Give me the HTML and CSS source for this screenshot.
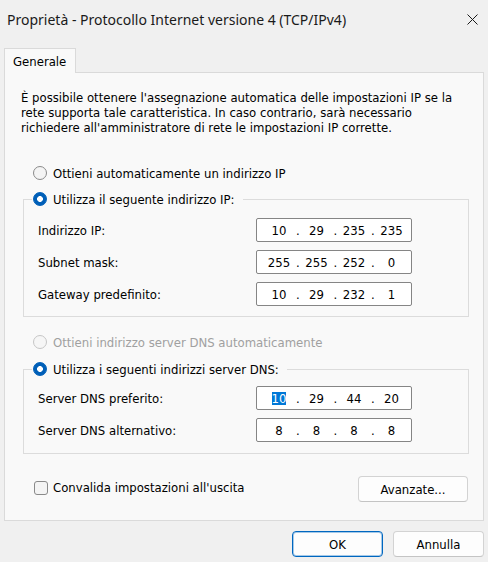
FILE: index.html
```html
<!DOCTYPE html>
<html lang="it">
<head>
<meta charset="utf-8">
<title>Proprietà - Protocollo Internet versione 4 (TCP/IPv4)</title>
<link rel="stylesheet" href="styles.css">
</head>
<body>
<div class="window">
  <div class="titlebar">
    <span class="title">Proprietà - Protocollo Internet versione 4 (TCP/IPv4)</span>
    <svg class="close" width="11" height="11" viewBox="0 0 11 11" aria-label="Chiudi">
      <path d="M0.5 0.5 L10.5 10.5 M10.5 0.5 L0.5 10.5" stroke="#1a1a1a" stroke-width="1" fill="none"/>
    </svg>
  </div>

  <div class="tabstrip">
    <div class="tab">Generale</div>
  </div>

  <div class="panel">
    <p class="intro">È possibile ottenere l'assegnazione automatica delle impostazioni IP se la<br>rete supporta tale caratteristica. In caso contrario, sarà necessario<br>richiedere all'amministratore di rete le impostazioni IP corrette.</p>

    <div class="option option-auto-ip">
      <span class="radio"></span>
      <span>Ottieni automaticamente un indirizzo IP</span>
    </div>

    <fieldset class="group group-ip">
      <legend class="legend">
        <span class="radio checked"></span>
        <span>Utilizza il seguente indirizzo IP:</span>
      </legend>
      <div class="rows rows-ip">
        <span class="label">Indirizzo IP:</span>
        <div class="ip"><span class="oct">10</span><span class="dot">.</span><span class="oct">29</span><span class="dot">.</span><span class="oct">235</span><span class="dot">.</span><span class="oct">235</span></div>
        <span class="label">Subnet mask:</span>
        <div class="ip"><span class="oct">255</span><span class="dot">.</span><span class="oct">255</span><span class="dot">.</span><span class="oct">252</span><span class="dot">.</span><span class="oct">0</span></div>
        <span class="label">Gateway predefinito:</span>
        <div class="ip"><span class="oct">10</span><span class="dot">.</span><span class="oct">29</span><span class="dot">.</span><span class="oct">232</span><span class="dot">.</span><span class="oct">1</span></div>
      </div>
    </fieldset>

    <div class="option option-auto-dns disabled">
      <span class="radio"></span>
      <span>Ottieni indirizzo server DNS automaticamente</span>
    </div>

    <fieldset class="group group-dns">
      <legend class="legend">
        <span class="radio checked"></span>
        <span>Utilizza i seguenti indirizzi server DNS:</span>
      </legend>
      <div class="rows rows-dns">
        <span class="label">Server DNS preferito:</span>
        <div class="ip"><span class="oct"><span class="sel">10</span></span><span class="dot">.</span><span class="oct">29</span><span class="dot">.</span><span class="oct">44</span><span class="dot">.</span><span class="oct">20</span></div>
        <span class="label">Server DNS alternativo:</span>
        <div class="ip"><span class="oct">8</span><span class="dot">.</span><span class="oct">8</span><span class="dot">.</span><span class="oct">8</span><span class="dot">.</span><span class="oct">8</span></div>
      </div>
    </fieldset>

    <div class="bottom-row">
      <div class="check-option">
        <span class="checkbox"></span>
        <span>Convalida impostazioni all'uscita</span>
      </div>
      <button class="btn btn-advanced">Avanzate...</button>
    </div>
  </div>

  <div class="footer">
    <button class="btn btn-dialog btn-default">OK</button>
    <button class="btn btn-dialog">Annulla</button>
  </div>
</div>
</body>
</html>
```

FILE: styles.css
```css
html, body {
  margin: 0;
  padding: 0;
}

body {
  background: #f0f0f0;
  color: #000;
  font-family: "DejaVu Sans Condensed", "DejaVu Sans", Tahoma, sans-serif;
  font-size: 13px;
  line-height: 15px;
}

.window {
  width: 488px;
  height: 562px;
  overflow: hidden;
}

.titlebar {
  height: 38px;
  display: flex;
  align-items: center;
  justify-content: space-between;
  padding: 0 10px 0 7px;
}

.title {
  font-family: "Noto Sans", "Open Sans", sans-serif;
  font-size: 14px;
  line-height: 19px;
  color: #1a1a1a;
}

.close {
  display: block;
}

.tabstrip {
  margin-top: 10px;
  padding-left: 4px;
  display: flex;
  position: relative;
  z-index: 1;
}

.tab {
  width: 72px;
  height: 25px;
  box-sizing: border-box;
  border: 1px solid #dadada;
  border-bottom: none;
  background: #f9f9f9;
  padding: 5px 0 0 8px;
}

.panel {
  margin: -1px 4px 0 4px;
  border: 1px solid #dadada;
  background: #f9f9f9;
  padding: 17px 14px 18px 16px;
}

.intro {
  margin: 0;
  white-space: nowrap;
}

.option {
  display: flex;
  align-items: center;
  gap: 6px;
  height: 16px;
  margin-left: 12px;
}

.option-auto-ip {
  margin-top: 30px;
}

.option-auto-dns {
  margin-top: 17px;
}

.disabled {
  color: #a0a0a0;
}

.radio {
  width: 14px;
  height: 14px;
  box-sizing: border-box;
  border-radius: 50%;
  border: 1px solid #8a8a8a;
  background: #f4f4f4;
  flex: none;
}

.radio.checked {
  border-color: #005fb8;
  background: radial-gradient(circle, #ffffff 0 2.6px, #005fb8 3.2px);
}

.disabled .radio {
  border-color: #c6c6c6;
  background: #f6f6f6;
}

.group {
  margin: 0 0 0 2px;
  padding: 0;
  border: 1px solid #dcdcdc;
  min-width: 0;
}

.group-ip {
  margin-top: 10px;
}

.group-dns {
  margin-top: 11px;
}

.legend {
  display: flex;
  align-items: center;
  gap: 6px;
  height: 16px;
  margin-left: 8px;
  padding: 0 8px 0 1px;
}

.rows {
  display: grid;
  grid-template-columns: 218px 156px;
  row-gap: 8px;
  align-items: center;
  padding-left: 14px;
}

.rows-ip {
  padding-top: 11px;
  padding-bottom: 10px;
}

.rows-dns {
  padding-top: 9px;
  padding-bottom: 11px;
}

.ip {
  display: flex;
  align-items: center;
  height: 24px;
  box-sizing: border-box;
  border: 1px solid #858585;
  border-radius: 2px;
  background: #ffffff;
  padding-left: 7px;
}

.oct {
  width: 30px;
  text-align: center;
}

.dot {
  width: 7.5px;
  text-align: center;
}

.sel {
  display: inline-block;
  background: #0078d7;
  color: #ffffff;
  line-height: 13px;
}

.bottom-row {
  display: flex;
  align-items: center;
  justify-content: space-between;
  margin-top: 22px;
  padding-left: 13px;
  padding-right: 1px;
}

.check-option {
  display: flex;
  align-items: center;
  gap: 5px;
  margin-top: -3px;
}

.checkbox {
  width: 14px;
  height: 14px;
  box-sizing: border-box;
  border: 1px solid #8a8a8a;
  border-radius: 3px;
  background: #f4f4f4;
}

.btn {
  font: inherit;
  color: #000;
  height: 26px;
  box-sizing: border-box;
  border: 1px solid #d3d3d3;
  border-bottom-color: #c4c4c4;
  border-radius: 4px;
  background: #fdfdfd;
  padding: 0;
  margin: 0;
}

.btn-advanced {
  width: 110px;
}

.footer {
  display: flex;
  justify-content: flex-end;
  gap: 10px;
  margin-top: 10px;
  padding-right: 4px;
}

.btn-dialog {
  width: 91px;
}

.btn-default {
  border-color: #0067c0;
  box-shadow: inset 0 0 0 1px rgba(0, 103, 192, 0.35);
}
```
